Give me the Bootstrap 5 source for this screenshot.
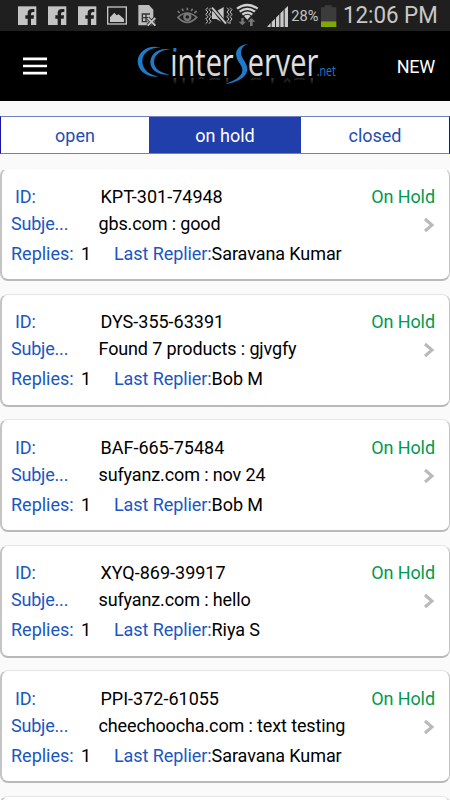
<!DOCTYPE html>
<html lang="en">
<head>
<meta charset="utf-8">
<meta name="viewport" content="width=device-width, initial-scale=1">
<title>InterServer tickets</title>
<link href="https://cdn.jsdelivr.net/npm/bootstrap@5.3.0/dist/css/bootstrap.min.css" rel="stylesheet">
<style>
body{font-family:Roboto,"Liberation Sans",sans-serif;font-size:18px;line-height:24px;letter-spacing:-.08px;background:#fafafa;color:#000;height:800px}
.statusbar{height:31px;background:#1f1f1f}
.appbar{height:70px;background:#000}
.appbar .menu{width:24px;height:18px;margin-left:23px}
.appbar .logo{width:215px;height:70px;margin-left:83px}
.appbar .new{font-size:18px;letter-spacing:-.25px;margin-right:15px;padding-top:2px}
.tabs{height:38px;margin-top:15px;border:1px solid #6f7fc4;border-left-color:#1515a0;border-right-color:#1515a0;background:#fff}
.tabs button{color:#1f4db5;font-size:18px;letter-spacing:0;line-height:36px;padding-top:1px!important;background:#fff;width:148px}
.tabs .current{background:#213fab;color:#fff;width:152px}
.tickets{margin-top:14px;gap:12.6px;height:632px;overflow:hidden}
.ticket{height:113px;border:1px solid #c4c4c4;border-left:2px solid #c4c4c4;border-top-color:#e6e6e6;border-bottom:2px solid #b9b9b9;border-radius:8px;background:#fff;padding:15.5px 14px 0 9px;flex:none}
.ticket:first-child{border-top-color:#f6f6f6}
.lbl{color:#1a56c4}
.id-l{width:85.5px;margin-left:4px}
.id-v{letter-spacing:0}
.subj-l{width:87.5px;letter-spacing:-.2px}
.subj-v{letter-spacing:-.13px}
.rep-l{width:70px;letter-spacing:0}
.rep-n{width:33px}
.row2{margin-top:3px}.row3{margin-top:6px}
.hold{color:#009a4e}
.chev{width:12px;height:16px;margin-top:5px}
</style>
<script src="https://cdn.jsdelivr.net/npm/bootstrap@5.3.0/dist/js/bootstrap.bundle.min.js"></script>
</head>
<body class="overflow-hidden">
<div class="statusbar">
<svg class="d-block" width="450" height="31" viewBox="0 0 1350 93" font-family="Roboto,sans-serif">
<defs>
<g id="fb"><rect width="55" height="56" fill="#c4c4c4"/><path d="M29 56V37H22V27H29V20Q29 8 42 8H49V17H44Q39 17 39 22V27H48L47 37H39V56Z" fill="#1f1f1f"/></g>
</defs>
<use href="#fb" x="54" y="19"/><use href="#fb" x="144" y="19"/><use href="#fb" x="234" y="19"/>
<rect x="323" y="21" width="56" height="51" fill="none" stroke="#c4c4c4" stroke-width="4"/>
<path d="M330 66V52L343 38L350 46L356 43L372 57V66Z" fill="#c4c4c4"/>
<path d="M415 15H447L460 29V50L468 76H415Z" fill="#bdbdbd"/>
<path d="M425 42H450M425 53H445M425 65H442M427 40V67M438 40V67" stroke="#333" stroke-width="4"/>
<path d="M443 54L466 77M466 54L443 77" stroke="#1f1f1f" stroke-width="11"/><path d="M443 54L466 77M466 54L443 77" stroke="#c4c4c4" stroke-width="6"/>
<g fill="none" stroke="#777" stroke-width="5"><path d="M534 52Q561 26 590 52Q561 82 534 52Z"/><path d="M539 39L533 33M550 33L546 26M562 31V23M573 33L578 26M583 39L590 33"/><circle cx="562" cy="51" r="9" stroke-width="7"/></g>
<path d="M624 23L617 29L624 36L617 43L624 50L617 57L624 64L617 71M633 23L627 29L633 36L627 43L633 50L627 57L633 64L627 71M681 23L687 29L681 36L687 43L681 50L687 57L681 64L687 71M690 23L696 29L690 36L696 43L690 50L696 57L690 64L690 71" fill="none" stroke="#c4c4c4" stroke-width="3"/>
<path d="M636 34H649L671 21V70L649 57H636Z" fill="#c4c4c4"/>
<path d="M636 20L678 74" stroke="#1f1f1f" stroke-width="12"/><path d="M636 23L678 71" stroke="#c4c4c4" stroke-width="6"/>
<g fill="none" stroke="#d0d0d0" stroke-width="7"><path d="M711 26Q742 4 773 26"/><path d="M719 35Q742 18 765 35"/><path d="M727 44Q742 32 757 44"/></g><path d="M732 48Q742 41 752 48L742 59Z" fill="#d0d0d0"/>
<path d="M731 54V65H738L727 76L716 65H724V54ZM750 78V65H743L754 54L766 65H758V78Z" fill="#777"/>
<path d="M801 81L812 69V81ZM815 81V66L825 56V81ZM828 81V53L838 43V81ZM841 81V40L851 30V81ZM854 81V27L864 18V81Z" fill="#c9c9c9"/>
<text x="874" y="64" font-size="45" textLength="81" lengthAdjust="spacingAndGlyphs" fill="#c4c4c4">28%</text>
<path d="M963 22H974V16H995V22H1009V64H963Z" fill="#3c3c3c"/><path d="M963 64H1009V81H963Z" fill="#80a800"/>
<text x="1029" y="70" font-size="69" textLength="284" lengthAdjust="spacingAndGlyphs" fill="#c8c8c8">12:06 PM</text>
</svg>
</div>
<header class="appbar d-flex align-items-center">
<svg class="menu" viewBox="0 0 24 18"><path d="M0 1.8H24M0 9H24M0 16.2H24" stroke="#fff" stroke-width="2.7"/></svg>
<svg class="logo" viewBox="0 -3 645 210" font-family="'Open Sans',sans-serif">
<defs><linearGradient id="fade" x1="0" y1="0" x2="0" y2="1"><stop stop-color="#fff" stop-opacity=".25"/><stop offset="1" stop-color="#fff" stop-opacity="0"/></linearGradient>
<linearGradient id="silver" x1="0" y1="0" x2="0" y2="1"><stop stop-color="#fff"/><stop offset="1" stop-color="#c4c4c4"/></linearGradient></defs>
<path d="M92 46C48 37 23 64 23 88C23 115 50 139 86 133C56 130 37 111 37 88C37 64 58 48 92 46Z" fill="#217ac8"/>
<path d="M121 52C80 46 61 69 61 91C61 113 83 131 119 128C91 123 72 110 72 91C72 70 90 54 121 52Z" fill="#217ac8"/>
<g fill="url(#silver)" font-size="117"><text x="121" y="132" textLength="190" lengthAdjust="spacingAndGlyphs">ınter</text><text x="353" y="132" textLength="212" lengthAdjust="spacingAndGlyphs">erver</text></g>
<rect x="130" y="48" width="9" height="11" fill="#217ac8"/>
<path d="M355 36C334 37 314 51 319 73C322 92 339 100 337 117C335 136 307 149 285 156C318 153 352 136 352 111C352 92 333 79 333 63C333 49 341 40 355 36Z" fill="#217ac8"/>
<path d="M131 138h8v20h-8ZM158 138h6v20h-6ZM184 138h7v20h-7ZM288 138h7v20h-7ZM424 138h7v20h-7ZM542 138h7v20h-7Z" fill="url(#fade)"/>
<path d="M207 140Q216 134 222 142M238 143Q253 137 271 142M362 143Q378 137 394 142M463 151L472 140L481 151M492 143Q508 137 524 142" fill="none" stroke="#222" stroke-width="5"/>
<text x="560" y="132" font-size="44" textLength="57" lengthAdjust="spacingAndGlyphs" fill="#217ac8">.net</text>
</svg>
<span class="new text-white ms-auto">NEW</span>
</header>
<div class="tabs d-flex"><button class="btn border-0 rounded-0 p-0">open</button><button class="current btn border-0 rounded-0 p-0">on hold</button><button class="btn border-0 rounded-0 p-0 flex-grow-1">closed</button></div>
<main class="tickets d-flex flex-column" id="tickets"></main>
<script>
const tickets=[["KPT-301-74948","gbs.com : good","Saravana Kumar"],["DYS-355-63391","Found 7 products : gjvgfy","Bob M"],["BAF-665-75484","sufyanz.com : nov 24","Bob M"],["XYQ-869-39917","sufyanz.com : hello","Riya S"],["PPI-372-61055","cheechoocha.com : text testing","Saravana Kumar"],["","",""]];
document.getElementById("tickets").innerHTML=tickets.map(([id,subject,who])=>`<article class="ticket">${id?`
<div class="d-flex"><span class="lbl id-l">ID:</span><span class="id-v">${id}</span><span class="hold ms-auto">On Hold</span></div>
<div class="d-flex row2"><span class="lbl subj-l">Subje...</span><span class="subj-v">${subject}</span><svg class="chev ms-auto" viewBox="0 0 12 16"><path d="M2 2L9 8L2 14" fill="none" stroke="#b9b9b9" stroke-width="3"/></svg></div>
<div class="d-flex row3"><span class="lbl rep-l">Replies:</span><span class="rep-n">1</span><span class="lbl">Last Replier:</span><span>${who}</span></div>`:""}</article>`).join("");
</script>
</body>
</html>
